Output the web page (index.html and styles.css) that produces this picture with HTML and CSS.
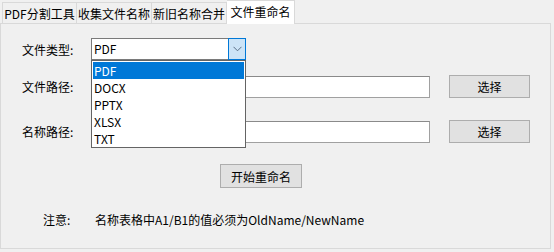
FILE: index.html
```html
<!DOCTYPE html>
<html>
<head>
<meta charset="utf-8">
<link rel="stylesheet" href="styles.css">
</head>
<body>
<div class="window">
  <div class="tabs">
    <div class="tab">PDF分割工具</div>
    <div class="tab">收集文件名称</div>
    <div class="tab">新旧名称合并</div>
    <div class="tab active">文件重命名</div>
  </div>
  <div class="panel">
    <div class="row row-type">
      <div class="label">文件类型:</div>
      <div class="combo">
        <div class="combo-value">PDF</div>
        <div class="combo-btn">
          <svg width="9" height="6" viewBox="0 0 9 6"><path d="M0.5 0.8 L4.5 4.8 L8.5 0.8" fill="none" stroke="#5a6f85" stroke-width="1"/></svg>
        </div>
        <div class="dropdown">
          <div class="opt sel">PDF</div>
          <div class="opt">DOCX</div>
          <div class="opt">PPTX</div>
          <div class="opt">XLSX</div>
          <div class="opt">TXT</div>
        </div>
      </div>
    </div>
    <div class="row row-path">
      <div class="label">文件路径:</div>
      <div class="input"></div>
      <div class="btn pick">选择</div>
    </div>
    <div class="row row-name">
      <div class="label">名称路径:</div>
      <div class="input"></div>
      <div class="btn pick">选择</div>
    </div>
    <div class="row row-start">
      <div class="btn start">开始重命名</div>
    </div>
    <div class="row row-note">
      <div class="note-label">注意:</div>
      <div class="note-text">名称表格中A1/B1的值必须为OldName/NewName</div>
    </div>
  </div>
</div>
</body>
</html>
```

FILE: styles.css
```css
* { box-sizing: border-box; }
html, body { margin: 0; padding: 0; }
body {
  background: #f0f0f0;
  font-family: "Noto Sans CJK SC", "Noto Sans", sans-serif;
  font-size: 12px;
  color: #000;
}
.window {
  width: 554px;
  height: 252px;
  background: #f0f0f0;
}
.tabs {
  display: flex;
  align-items: flex-end;
  height: 23px;
  padding-left: 2px;
}
.tab {
  height: 21px;
  width: 75px;
  border: 1px solid #d9d9d9;
  border-bottom: none;
  border-left: none;
  background: #f0f0f0;
  display: flex;
  align-items: center;
  justify-content: center;
  font-size: 12px;
  line-height: 1;
  color: #000;
  padding-top: 1px;
}
.tab:first-child { border-left: 1px solid #d9d9d9; }
.tab.active {
  height: 24px;
  width: 68px;
  background: #fff;
  margin-bottom: -1px;
  position: relative;
  z-index: 1;
  padding-bottom: 2px;
}
.panel {
  width: 551px;
  height: 226px;
  border: 1px solid #d9d9d9;
  padding-top: 14px;
}
.row {
  display: flex;
  align-items: center;
}
.label {
  width: 90px;
  padding-left: 21px;
}
.row-type { height: 22px; }
.combo {
  position: relative;
  width: 155px;
  height: 22px;
  border: 1px solid #7a7a7a;
  background: #fff;
  display: flex;
}
.combo-value {
  flex: 1;
  padding-left: 2px;
  line-height: 20px;
}
.combo-btn {
  width: 18px;
  height: 22px;
  margin: -1px -1px -1px 0;
  border: 1px solid #0078d7;
  background: #cce4f7;
  display: flex;
  align-items: center;
  justify-content: center;
}
.dropdown {
  position: absolute;
  left: -1px;
  top: 21px;
  width: 155px;
  height: 88px;
  border: 1px solid #646464;
  background: #fff;
  padding: 1px;
  z-index: 5;
}
.opt {
  height: 17px;
  line-height: 17px;
  padding-left: 1px;
}
.opt.sel {
  background: #0078d7;
  color: #fff;
}
.row-path { margin-top: 15px; height: 23px; }
.row-name { margin-top: 22px; height: 23px; }
.input {
  width: 339px;
  height: 22px;
  border: 1px solid #a0a0a0;
  border-top-color: #8a8a8a;
  border-left-color: #8a8a8a;
  background: #fff;
}
.btn {
  background: #e1e1e1;
  border: 1px solid #adadad;
  display: flex;
  align-items: center;
  justify-content: center;
}
.pick {
  width: 81px;
  height: 23px;
  margin-left: 19px;
}
.row-start {
  margin-top: 21px;
  padding-left: 219px;
}
.start {
  width: 82px;
  height: 24px;
}
.row-note {
  margin-top: 23px;
  height: 17px;
}
.note-label {
  width: 94px;
  padding-left: 42px;
}
```
